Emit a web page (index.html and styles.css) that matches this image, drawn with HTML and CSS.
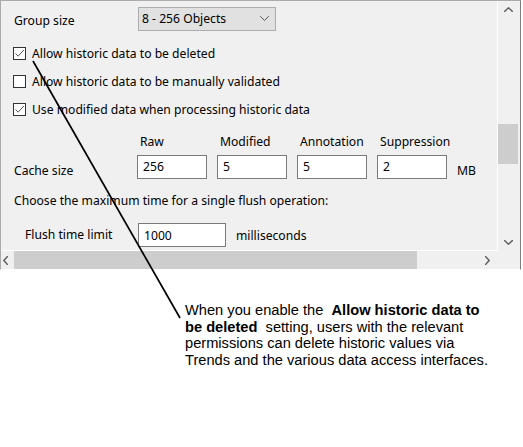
FILE: index.html
```html
<!DOCTYPE html>
<html lang="en">
<head>
  <meta charset="UTF-8" />
  <meta name="viewport" content="width=device-width, initial-scale=1.0" />
  <title>Historic data settings</title>
  <link rel="stylesheet" href="styles.css">
</head>
<body>
  <div class="window">
    <div class="viewport">
      <div class="group-row">
        <span class="field-label">Group size</span>
        <div class="select">
          <span>8 - 256 Objects</span>
          <svg class="select-arrow" width="9" height="5" viewBox="0 0 9 5"><path d="M0.5 0.5 L4.5 4.5 L8.5 0.5" /></svg>
        </div>
      </div>

      <label class="check-row">
        <span class="checkbox"><svg width="11" height="11" viewBox="0 0 11 11"><path d="M1.8 5.6 L4.2 8.2 L9.6 2.2" /></svg></span>
        Allow historic data to be deleted
      </label>
      <label class="check-row">
        <span class="checkbox"></span>
        Allow historic data to be manually validated
      </label>
      <label class="check-row">
        <span class="checkbox"><svg width="11" height="11" viewBox="0 0 11 11"><path d="M1.8 5.6 L4.2 8.2 L9.6 2.2" /></svg></span>
        Use modified data when processing historic data
      </label>

      <div class="cache">
        <span></span>
        <span class="col-head">Raw</span>
        <span class="col-head">Modified</span>
        <span class="col-head">Annotation</span>
        <span class="col-head">Suppression</span>
        <span></span>

        <span class="field-label low">Cache size</span>
        <div class="textbox">256</div>
        <div class="textbox">5</div>
        <div class="textbox">5</div>
        <div class="textbox">2</div>
        <span class="low">MB</span>
      </div>

      <div class="hint">Choose the maximum time for a single flush operation:</div>

      <div class="flush-row">
        <span class="flush-label">Flush time limit</span>
        <div class="textbox wide">1000</div>
        <span>milliseconds</span>
      </div>
    </div>

    <div class="vscroll">
      <div class="scroll-btn">
        <svg width="9" height="5" viewBox="0 0 9 5"><path d="M0.5 4.5 L4.5 0.8 L8.5 4.5" /></svg>
      </div>
      <div class="vtrack"><div class="vthumb"></div></div>
      <div class="scroll-btn">
        <svg width="9" height="5" viewBox="0 0 9 5"><path d="M0.5 0.5 L4.5 4.2 L8.5 0.5" /></svg>
      </div>
    </div>

    <div class="hscroll">
      <div class="hbtn left">
        <svg width="5" height="9" viewBox="0 0 5 9"><path d="M4.5 0.5 L0.8 4.5 L4.5 8.5" /></svg>
      </div>
      <div class="hthumb"></div>
      <div class="hbtn right">
        <svg width="5" height="9" viewBox="0 0 5 9"><path d="M0.5 0.5 L4.2 4.5 L0.5 8.5" /></svg>
      </div>
    </div>

    <div class="corner"></div>
  </div>

  <!-- leader line from the setting to the note -->
  <svg class="leader" width="523" height="447" viewBox="0 0 523 447">
    <line x1="33" y1="61" x2="180" y2="318" />
  </svg>

  <p class="callout">
    When you enable the &nbsp;<b>Allow historic data to</b><br>
    <b>be deleted</b>&nbsp; setting, users with the relevant<br>
    permissions can delete historic values via<br>
    Trends and the various data access interfaces.
  </p>
</body>
</html>
```

FILE: styles.css
```css
:root {
  --panel: #f0f0f0;
  --thumb: #cdcdcd;
  --arrow: #606060;
  --input-border: #7a7a7a;
}

* {
  box-sizing: border-box;
}

body {
  margin: 0;
  background: #fff;
  font-family: "Noto Sans", "Segoe UI", sans-serif;
}

.window {
  width: 521px;
  height: 270px;
  border: 1px solid #ababab;
  border-right-color: #7c7c7c;
  border-bottom-color: #fff;
  padding-right: 2px;
  background: var(--panel);
  display: grid;
  grid-template-columns: 497px 20px;
  grid-template-rows: 250px 18px;
}

.viewport {
  overflow: hidden;
  padding-left: 11px;
  border-right: 1px solid #fff;
  border-bottom: 1px solid #fff;
  font-size: 12.15px;
  color: #000;
}

.group-row {
  display: flex;
  align-items: center;
  height: 24px;
  margin-top: 6px;
}

.field-label {
  width: 126px;
  padding-left: 2px;
  padding-top: 3px;
}

.select {
  width: 138px;
  height: 24px;
  background: #e1e1e1;
  border: 1px solid #adadad;
  display: flex;
  align-items: center;
  justify-content: space-between;
  padding: 0 6px 2px 3px;
}

.select-arrow path,
.checkbox path,
.scroll-btn path,
.hbtn path {
  fill: none;
  stroke-linecap: round;
  stroke-linejoin: round;
}

.select-arrow path {
  stroke: #555;
  stroke-width: 1;
}

.check-row {
  display: flex;
  align-items: center;
  gap: 6px;
  height: 28px;
  margin-left: 1px;
}

.group-row + .check-row {
  margin-top: 8px;
}

.checkbox {
  width: 13px;
  height: 13px;
  border: 1px solid #333;
  background: #fff;
  display: flex;
  align-items: center;
  justify-content: center;
}

.checkbox path {
  stroke: #555;
  stroke-width: 1;
}

.cache {
  display: grid;
  grid-template-columns: 115px 70px 70px 70px 70px auto;
  grid-template-rows: 18px 24px;
  column-gap: 10px;
  row-gap: 5px;
  align-items: center;
  margin-top: 9px;
}

.col-head {
  padding-left: 3px;
}

.low {
  padding-top: 6px;
}

.textbox {
  height: 24px;
  border: 1px solid var(--input-border);
  background: #fff;
  padding: 0 0 2px 5px;
  display: flex;
  align-items: center;
}

.textbox.wide {
  width: 88px;
}

.hint {
  height: 18px;
  line-height: 18px;
  margin-top: 13px;
  padding-left: 2px;
}

.flush-row {
  display: flex;
  align-items: center;
  height: 24px;
  margin-top: 13px;
}

.flush-label {
  width: 126px;
  padding-left: 13px;
  padding-bottom: 2px;
}

.flush-row .textbox {
  margin-right: 10px;
  padding-top: 2px;
}

.vscroll {
  display: flex;
  flex-direction: column;
}

.scroll-btn {
  height: 17px;
  display: flex;
  align-items: center;
  justify-content: center;
}

.scroll-btn path,
.hbtn path {
  stroke: var(--arrow);
  stroke-width: 1.5;
}

.vtrack {
  flex: 1;
}

.vthumb {
  margin-top: 106px;
  height: 40px;
  background: var(--thumb);
}

.hscroll {
  display: flex;
  align-items: stretch;
}

.hbtn {
  display: flex;
  align-items: center;
}

.hbtn.left {
  width: 13px;
  padding-left: 2px;
}

.hbtn.right {
  width: 17px;
  margin-left: auto;
  padding-left: 4px;
}

.hthumb {
  width: 403px;
  background: var(--thumb);
}

.leader {
  position: absolute;
  top: 0;
  left: 0;
  pointer-events: none;
}

.leader line {
  stroke: #000;
  stroke-width: 1.7;
}

.callout {
  margin: 32px 0 0 185px;
  font-family: "Liberation Sans", Arial, sans-serif;
  font-size: 14.65px;
  line-height: 16.6px;
  color: #000;
}
```
